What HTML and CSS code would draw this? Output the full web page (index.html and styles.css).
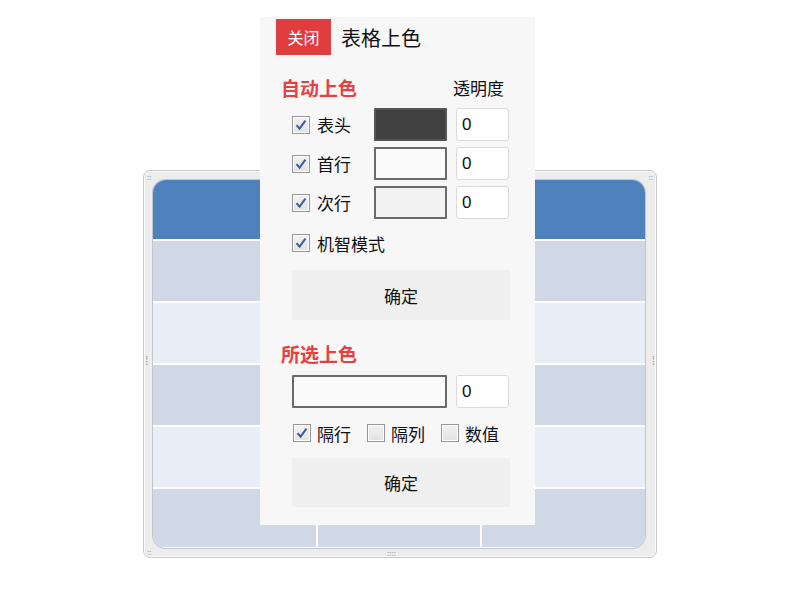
FILE: index.html
```html
<!DOCTYPE html>
<html lang="zh-CN">
<head>
    <meta charset="UTF-8">
    <title>表格上色</title>
    <link rel="stylesheet" href="styles.css">
</head>
<body>
<div class="stage">

    <!-- table preview in its frame -->
    <div class="frame">
        <div class="grid">
            <div class="cell head"></div>
            <div class="cell dark"></div><div class="cell dark"></div><div class="cell dark"></div>
            <div class="cell light"></div><div class="cell light"></div><div class="cell light"></div>
            <div class="cell dark"></div><div class="cell dark"></div><div class="cell dark"></div>
            <div class="cell light"></div><div class="cell light"></div><div class="cell light"></div>
            <div class="cell dark"></div><div class="cell dark"></div><div class="cell dark"></div>
        </div>
        <span class="dots dots-tl">::</span>
        <span class="dots dots-tr">::</span>
        <span class="dots dots-bl">::</span>
        <span class="dots dots-bm">::::</span>
        <span class="dots dots-ml">⁞</span>
        <span class="dots dots-mr">⁞</span>
    </div>

    <!-- colour panel -->
    <div class="panel">
        <div class="panel-head">
            <button class="close-btn">关闭</button>
            <span class="panel-title">表格上色</span>
        </div>

        <div class="section-head">
            <span class="section-title">自动上色</span>
            <span class="alpha-label">透明度</span>
        </div>

        <div class="row first-row">
            <span class="check on"></span>
            <span class="row-label">表头</span>
            <span class="swatch swatch-head"></span>
            <input class="alpha" type="text" value="0">
        </div>
        <div class="row">
            <span class="check on"></span>
            <span class="row-label">首行</span>
            <span class="swatch swatch-first"></span>
            <input class="alpha" type="text" value="0">
        </div>
        <div class="row">
            <span class="check on"></span>
            <span class="row-label">次行</span>
            <span class="swatch swatch-second"></span>
            <input class="alpha" type="text" value="0">
        </div>

        <div class="option smart">
            <span class="check on"></span>
            <span class="row-label">机智模式</span>
        </div>

        <button class="ok-btn ok-auto">确定</button>

        <div class="section-head picked">
            <span class="section-title">所选上色</span>
        </div>

        <div class="row pick-row">
            <span class="swatch swatch-wide"></span>
            <input class="alpha" type="text" value="0">
        </div>

        <div class="options">
            <span class="option"><span class="check on"></span><span class="row-label">隔行</span></span>
            <span class="option"><span class="check"></span><span class="row-label">隔列</span></span>
            <span class="option"><span class="check"></span><span class="row-label">数值</span></span>
        </div>

        <button class="ok-btn ok-pick">确定</button>
    </div>

</div>
</body>
</html>
```

FILE: styles.css
```css
/* Page */
body {
    margin: 0;
    background-color: #FFFFFF;
    font-family: "Noto Sans CJK SC", "Liberation Sans", sans-serif;
    color: #222;
}

.stage {
    position: relative;
    width: 800px;
    height: 600px;
    overflow: hidden;
}

/* Table frame */
.frame {
    position: relative;
    margin: 170px 0 0 143px;
    width: 494px;
    height: 368px;
    padding: 9px;
    border: 1px solid #C9C9C9;
    border-radius: 7px;
    background-color: #ECECEC;
    box-shadow: inset 0 0 0 1px #FAFAFA;
}

.grid {
    width: 492px;
    height: 368px;
    display: grid;
    grid-template-columns: 163px 162px 163px;
    grid-template-rows: 59px 60px 60px 60px 60px 58px;
    gap: 2px;
    background-color: #FFFFFF;
    border-radius: 13px;
    overflow: hidden;
    box-shadow: 0 0 0 1px #BFC6D0;
}

.cell.head {
    grid-column: 1 / 4;
    background-color: #4F81BD;
}
.cell.dark {
    background-color: #D0D8E8;
}
.cell.light {
    background-color: #E9EDF5;
}

.dots {
    position: absolute;
    font-size: 8px;
    line-height: 8px;
    color: #9A9A9A;
    letter-spacing: 0;
}
.dots-tl { left: 3px; top: 2px; }
.dots-tr { right: 3px; top: 2px; }
.dots-bl { left: 3px; bottom: 1px; }
.dots-bm { left: 243px; bottom: 0; }
.dots-ml { left: 1px; top: 185px; font-size: 12px; }
.dots-mr { right: 1px; top: 185px; font-size: 12px; }

/* Panel */
.panel {
    position: absolute;
    left: 260px;
    top: 17px;
    width: 275px;
    height: 508px;
    box-sizing: border-box;
    padding: 2px 0 0 16px;
    background-color: #F7F7F7;
}

.panel-head {
    display: flex;
    align-items: center;
    height: 36px;
}

.close-btn {
    width: 55px;
    height: 36px;
    border: none;
    background-color: #E03D3E;
    color: #FFFFFF;
    font-family: inherit;
    font-size: 16px;
    padding: 0;
}

.panel-title {
    margin-left: 10px;
    font-size: 20px;
    color: #111;
}

.section-head {
    display: flex;
    align-items: center;
    height: 22px;
    margin: 21px 0 0 5px;
}

.section-title {
    font-size: 19px;
    font-weight: bold;
    color: #E8403F;
    width: 172px;
}

.alpha-label {
    font-size: 17px;
    color: #111;
}

.row {
    display: flex;
    align-items: center;
    height: 33px;
    margin-top: 6px;
    padding-left: 16px;
}

.row.first-row {
    margin-top: 10px;
}

.check {
    display: inline-block;
    box-sizing: border-box;
    width: 18px;
    height: 18px;
    border: 1px solid #979797;
    background: linear-gradient(#F2F2F2, #E2E2E2);
    box-shadow: inset 0 0 0 1px #FFFFFF;
    flex-shrink: 0;
}

.check.on {
    background:
        url("data:image/svg+xml;utf8,<svg xmlns='http://www.w3.org/2000/svg' width='16' height='16'><path d='M3.5 8.2 L6.6 11.6 L12.4 3.6' fill='none' stroke='%233B5BA5' stroke-width='2'/></svg>") center / 16px 16px no-repeat,
        linear-gradient(#F2F2F2, #E2E2E2);
}

.row-label {
    margin-left: 7px;
    font-size: 17px;
    color: #111;
}

.row .row-label {
    width: 57px;
}

.swatch {
    box-sizing: border-box;
    width: 73px;
    height: 33px;
    border: 2px solid #6A6A6A;
    border-radius: 1px;
}

.swatch-head { background-color: #404040; border-color: #555; }
.swatch-first { background-color: #FAFAFA; }
.swatch-second { background-color: #F2F2F2; }
.swatch-wide { width: 155px; background-color: #FAFAFA; }

.alpha {
    box-sizing: border-box;
    width: 53px;
    height: 33px;
    margin-left: 9px;
    padding: 0 5px;
    border: 1px solid #DADADA;
    border-radius: 3px;
    background-color: #FFFFFF;
    font-family: "Liberation Sans", sans-serif;
    font-size: 17px;
    color: #111;
}

.option {
    display: inline-flex;
    align-items: center;
}

.smart {
    display: flex;
    height: 18px;
    margin: 15px 0 0 16px;
}

.ok-btn {
    display: block;
    width: 218px;
    height: 50px;
    margin-left: 16px;
    border: none;
    background-color: #EFEFEF;
    font-family: inherit;
    font-size: 17px;
    color: #111;
    padding: 0;
}

.ok-auto {
    margin-top: 18px;
}

.section-head.picked {
    margin-top: 22px;
}

.pick-row {
    margin-top: 11px;
}

.options {
    display: flex;
    height: 18px;
    margin: 16px 0 0 17px;
}

.options .option {
    margin-right: 16px;
}

.options .row-label {
    margin-left: 6px;
}

.ok-pick {
    margin-top: 16px;
    height: 49px;
}
```
